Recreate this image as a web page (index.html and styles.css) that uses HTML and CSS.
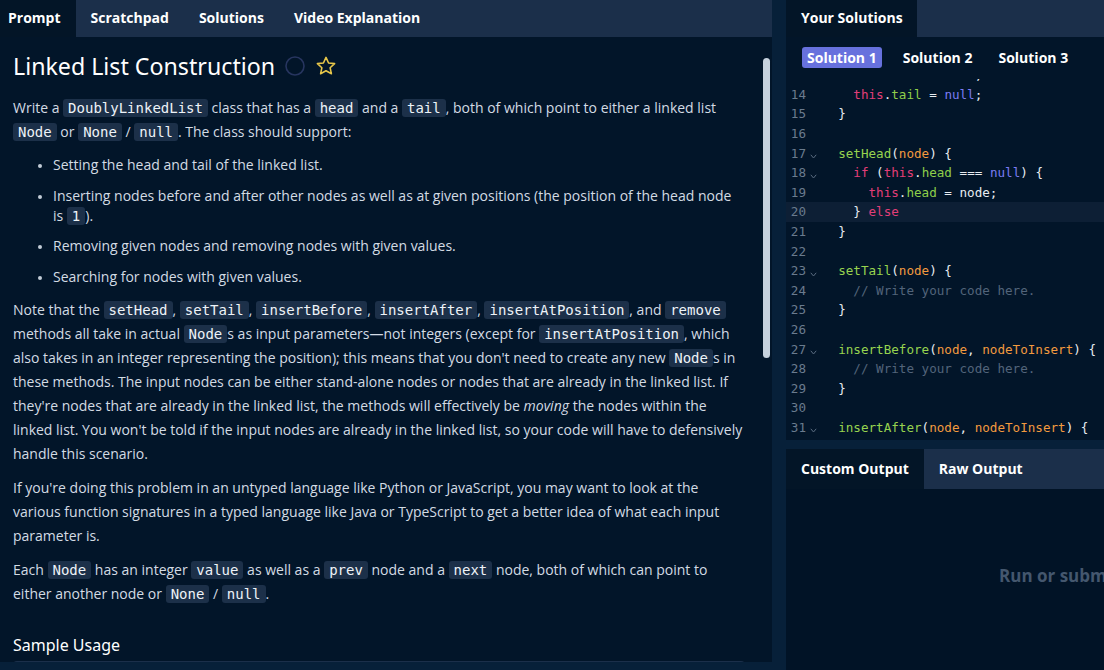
FILE: index.html
```html
<!DOCTYPE html>
<html lang="en">
<head>
<meta charset="utf-8">
<title>Linked List Construction</title>
<link rel="stylesheet" href="styles.css">
</head>
<body>
<div class="app">
  <section class="left">
    <nav class="tabs">
      <div class="tab tab-first active">Prompt</div>
      <div class="tab">Scratchpad</div>
      <div class="tab">Solutions</div>
      <div class="tab">Video Explanation</div>
    </nav>
    <div class="prompt">
      <div class="prompt-content">
        <h1 class="title">Linked List Construction
          <svg class="icon-circle" width="20" height="20" viewBox="0 0 20 20"><circle cx="10" cy="10" r="9" fill="none" stroke="#27355f" stroke-width="1.6"/></svg>
          <svg class="icon-star" width="22" height="22" viewBox="0 0 24 24"><path d="M12 2.6l2.8 6.1 6.6.7-4.9 4.5 1.4 6.6L12 17.2l-5.9 3.3 1.4-6.6-4.9-4.5 6.6-.7z" fill="none" stroke="#e7c64a" stroke-width="1.7" stroke-linejoin="round"/></svg>
        </h1>
        <p>Write a <code>DoublyLinkedList</code> class that has a <code>head</code> and a <code>tail</code>, both of which point to either a linked list <code>Node</code> or <code>None</code> / <code>null</code>. The class should support:</p>
        <ul>
          <li>Setting the head and tail of the linked list.</li>
          <li>Inserting nodes before and after other nodes as well as at given positions (the position of the head node is <code>1</code>).</li>
          <li>Removing given nodes and removing nodes with given values.</li>
          <li>Searching for nodes with given values.</li>
        </ul>
        <p>Note that the <code>setHead</code>, <code>setTail</code>, <code>insertBefore</code>, <code>insertAfter</code>, <code>insertAtPosition</code>, and <code>remove</code> methods all take in actual <code>Node</code>s as input parameters—not integers (except for <code>insertAtPosition</code>, which also takes in an integer representing the position); this means that you don't need to create any new <code>Node</code>s in these methods. The input nodes can be either stand-alone nodes or nodes that are already in the linked list. If they're nodes that are already in the linked list, the methods will effectively be <em>moving</em> the nodes within the linked list. You won't be told if the input nodes are already in the linked list, so your code will have to defensively handle this scenario.</p>
        <p>If you're doing this problem in an untyped language like Python or JavaScript, you may want to look at the various function signatures in a typed language like Java or TypeScript to get a better idea of what each input parameter is.</p>
        <p>Each <code>Node</code> has an integer <code>value</code> as well as a <code>prev</code> node and a <code>next</code> node, both of which can point to either another node or <code>None</code> / <code>null</code>.</p>
        <h2 class="subtitle">Sample Usage</h2>
        <div class="sample-block"></div>
      </div>
      <div class="scrollbar"></div>
    </div>
  </section>

  <section class="right">
    <div class="solutions-panel">
      <nav class="tabs">
        <div class="tab active">Your Solutions</div>
      </nav>
      <div class="sol-buttons">
        <div class="sol-btn selected">Solution 1</div>
        <div class="sol-btn">Solution 2</div>
        <div class="sol-btn">Solution 3</div>
      </div>
      <div class="editor">
        <div class="lines">
          <div class="line"><span class="ln">13</span><span class="fold"></span><span class="code">    <span class="kw">this</span>.<span class="prop">head</span> = <span class="nul">null</span>;</span></div>
          <div class="line"><span class="ln">14</span><span class="fold"></span><span class="code">    <span class="kw">this</span>.<span class="prop">tail</span> = <span class="nul">null</span>;</span></div>
          <div class="line"><span class="ln">15</span><span class="fold"></span><span class="code">  }</span></div>
          <div class="line"><span class="ln">16</span><span class="fold"></span><span class="code"></span></div>
          <div class="line"><span class="ln">17</span><span class="fold"><svg width="7" height="5" viewBox="0 0 7 5"><path d="M.8.8L3.5 4 6.2.8" fill="none" stroke="#5b6c80" stroke-width="1"/></svg></span><span class="code">  <span class="fn">setHead</span>(<span class="par">node</span>) {</span></div>
          <div class="line"><span class="ln">18</span><span class="fold"><svg width="7" height="5" viewBox="0 0 7 5"><path d="M.8.8L3.5 4 6.2.8" fill="none" stroke="#5b6c80" stroke-width="1"/></svg></span><span class="code">    <span class="kw">if</span> (<span class="kw">this</span>.<span class="prop">head</span> === <span class="nul">null</span>) {</span></div>
          <div class="line"><span class="ln">19</span><span class="fold"></span><span class="code">      <span class="kw">this</span>.<span class="prop">head</span> = node;</span></div>
          <div class="line current"><span class="ln">20</span><span class="fold"></span><span class="code">    } <span class="kw">else</span></span></div>
          <div class="line"><span class="ln">21</span><span class="fold"></span><span class="code">  }</span></div>
          <div class="line"><span class="ln">22</span><span class="fold"></span><span class="code"></span></div>
          <div class="line"><span class="ln">23</span><span class="fold"><svg width="7" height="5" viewBox="0 0 7 5"><path d="M.8.8L3.5 4 6.2.8" fill="none" stroke="#5b6c80" stroke-width="1"/></svg></span><span class="code">  <span class="fn">setTail</span>(<span class="par">node</span>) {</span></div>
          <div class="line"><span class="ln">24</span><span class="fold"></span><span class="code">    <span class="cm">// Write your code here.</span></span></div>
          <div class="line"><span class="ln">25</span><span class="fold"></span><span class="code">  }</span></div>
          <div class="line"><span class="ln">26</span><span class="fold"></span><span class="code"></span></div>
          <div class="line"><span class="ln">27</span><span class="fold"><svg width="7" height="5" viewBox="0 0 7 5"><path d="M.8.8L3.5 4 6.2.8" fill="none" stroke="#5b6c80" stroke-width="1"/></svg></span><span class="code">  <span class="fn">insertBefore</span>(<span class="par">node</span>, <span class="par">nodeToInsert</span>) {</span></div>
          <div class="line"><span class="ln">28</span><span class="fold"></span><span class="code">    <span class="cm">// Write your code here.</span></span></div>
          <div class="line"><span class="ln">29</span><span class="fold"></span><span class="code">  }</span></div>
          <div class="line"><span class="ln">30</span><span class="fold"></span><span class="code"></span></div>
          <div class="line"><span class="ln">31</span><span class="fold"><svg width="7" height="5" viewBox="0 0 7 5"><path d="M.8.8L3.5 4 6.2.8" fill="none" stroke="#5b6c80" stroke-width="1"/></svg></span><span class="code">  <span class="fn">insertAfter</span>(<span class="par">node</span>, <span class="par">nodeToInsert</span>) {</span></div>
          <div class="line"><span class="ln">32</span><span class="fold"></span><span class="code">    <span class="cm">// Write your code here.</span></span></div>
        </div>
      </div>
    </div>
    <div class="output-panel">
      <nav class="tabs">
        <div class="tab active">Custom Output</div>
        <div class="tab">Raw Output</div>
      </nav>
      <div class="output-body">
        <div class="output-msg">Run or submit your code to see the output</div>
      </div>
    </div>
  </section>
</div>
</body>
</html>
```

FILE: styles.css
```css
* { box-sizing: border-box; }

html, body {
  margin: 0;
  padding: 0;
}

body {
  width: 1104px;
  height: 670px;
  overflow: hidden;
  background: #072039;
  font-family: "Open Sans", "Noto Sans", sans-serif;
  color: #d3dbe4;
}

.app {
  display: flex;
  gap: 14px;
  height: 670px;
}

/* ---------- tabs ---------- */
.tabs {
  display: flex;
  height: 37px;
  background: #1b2f4a;
  flex-shrink: 0;
}

.tab {
  display: flex;
  align-items: center;
  padding: 0 15px 2px;
  font-weight: 700;
  font-size: 14px;
  color: #ffffff;
  white-space: nowrap;
}

.tab.active {
  background: #031527;
}

.tab-first {
  padding-left: 8px;
}

/* ---------- left panel ---------- */
.left {
  width: 772px;
  height: 662px;
  display: flex;
  flex-direction: column;
  background: #021529;
}

.prompt {
  position: relative;
  flex: 1;
  overflow: hidden;
}

.prompt-content {
  padding: 13px 27px 0 13px;
  font-size: 14px;
  line-height: 24px;
}

.title {
  display: flex;
  align-items: center;
  margin: 0 0 14px;
  font-family: "Noto Sans", "Open Sans", sans-serif;
  font-weight: 400;
  font-size: 23.2px;
  line-height: 32px;
  color: #ffffff;
}

.icon-circle {
  margin-left: 10px;
}

.icon-star {
  margin-left: 10px;
}

p {
  margin: 10px 0;
}

.title + p {
  margin-top: 14px;
}

ul {
  margin: 11px 0 0;
  padding-left: 40px;
}

li {
  line-height: 20px;
  margin-bottom: 10.7px;
}

li::marker {
  color: #c2ccd6;
  font-size: 12px;
}

code {
  font-family: "DejaVu Sans Mono", "Liberation Mono", monospace;
  font-size: 14px;
  background: #1c3049;
  color: #eef3f8;
  border-radius: 3px;
  padding: 1px 5px;
}

em {
  font-style: italic;
}

.subtitle {
  margin: 27px 0 0;
  font-family: "Noto Sans", "Open Sans", sans-serif;
  font-weight: 400;
  font-size: 16px;
  line-height: 24px;
  color: #ffffff;
}

.sample-block {
  margin-top: 4px;
  height: 60px;
  width: 732px;
  background: #1b2f4a;
  border-radius: 4px;
}

.scrollbar {
  position: absolute;
  top: 21px;
  right: 2px;
  width: 7px;
  height: 300px;
  border-radius: 4px;
  background: #c6d1dd;
}

/* ---------- right panel ---------- */
.right {
  width: 318px;
  display: flex;
  flex-direction: column;
  gap: 9px;
}

.solutions-panel {
  height: 440px;
  background: #021529;
  display: flex;
  flex-direction: column;
}

.solutions-panel .tabs .tab.active {
  width: 131px;
}

.sol-buttons {
  display: flex;
  align-items: center;
  gap: 16px;
  height: 42px;
  padding: 0 16px 2px;
  flex-shrink: 0;
}

.sol-btn {
  font-weight: 700;
  font-size: 14px;
  color: #ffffff;
  padding: 1px 5px;
  border-radius: 3px;
}

.sol-btn.selected {
  background: #6771dd;
}

.editor {
  flex: 1;
  overflow: hidden;
}

.lines {
  margin-top: -14px;
  font-family: "DejaVu Sans Mono", "Liberation Mono", monospace;
  font-size: 12.6px;
}

.line {
  display: flex;
  height: 19.6px;
  align-items: center;
  white-space: pre;
  color: #e8edf2;
}

.line.current {
  background: #0d1f35;
}

.ln {
  width: 20px;
  text-align: right;
  color: #6a7b8e;
  flex-shrink: 0;
}

.fold {
  width: 17px;
  flex-shrink: 0;
  display: flex;
  justify-content: center;
  padding-top: 7px;
  padding-left: 2px;
  padding-right: 4px;
  height: 100%;
  align-items: center;
}

.code { color: #e8edf2; }
.kw { color: #e23e78; }
.prop { color: #8fcf4a; }
.fn { color: #97d34f; }
.par { color: #f29a3f; }
.nul { color: #7b7cf3; }
.cm { color: #52647a; }

/* ---------- output ---------- */
.output-panel {
  flex: 1;
  background: #011326;
  display: flex;
  flex-direction: column;
}

.output-panel .tabs {
  height: 40px;
}

.output-body {
  flex: 1;
  overflow: hidden;
  padding: 75px 0 0 213px;
}

.output-msg {
  white-space: nowrap;
  font-weight: 700;
  font-size: 17px;
  color: #44576e;
}
```
